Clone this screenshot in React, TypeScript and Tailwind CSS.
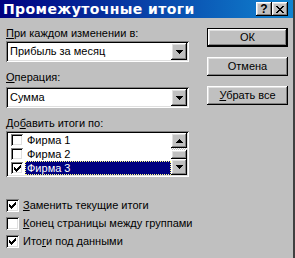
import React from "react";

const raised =
  "shadow-[inset_-1px_-1px_0_#000,inset_1px_1px_0_#fff,inset_-2px_-2px_0_#808080,inset_2px_2px_0_#dfdfdf]";
const sunken =
  "shadow-[inset_1px_1px_0_#808080,inset_-1px_-1px_0_#fff,inset_2px_2px_0_#000,inset_-2px_-2px_0_#dfdfdf]";

function Check() {
  const starts = [2, 3, 4, 3, 2, 1, 0];
  const d = starts.map((s, i) => `M${i} ${s}h1v3h-1z`).join("");
  return (
    <svg width="7" height="7" viewBox="0 0 7 7" shapeRendering="crispEdges">
      <path d={d} fill="#000" />
    </svg>
  );
}

function DownArrow() {
  return (
    <svg width="7" height="4" viewBox="0 0 7 4" shapeRendering="crispEdges">
      <path d="M0 0h7v1h-1v1h-1v1h-1v1h-1v-1h-1v-1h-1v-1h-1z" fill="#000" />
    </svg>
  );
}

function UpArrow() {
  return (
    <svg width="7" height="4" viewBox="0 0 7 4" shapeRendering="crispEdges">
      <path d="M3 0h1v1h1v1h1v1h1v1h-7v-1h1v-1h1v-1h1z" fill="#000" />
    </svg>
  );
}

function CheckBox({ checked, size = 13 }: { checked: boolean; size?: number }) {
  return (
    <div
      className={`flex items-center justify-center bg-white shrink-0 ${sunken}`}
      style={{ width: size, height: size }}
    >
      {checked && <Check />}
    </div>
  );
}

function Combo({ value }: { value: string }) {
  return (
    <div className={`h-[21px] w-[183px] bg-white flex items-stretch p-[2px] ${sunken}`}>
      <div className="flex-1 flex items-center pl-[2px] text-black">{value}</div>
      <div className={`w-[16px] bg-[#c0c0c0] flex items-center justify-center ${raised}`}>
        <DownArrow />
      </div>
    </div>
  );
}

function Button({ children, def }: { children: React.ReactNode; def?: boolean }) {
  return (
    <div className={`h-[19px] w-[81px] ${def ? "border border-black" : ""}`}>
      <div className={`h-full w-full bg-[#c0c0c0] flex items-center justify-center ${raised}`}>
        {children}
      </div>
    </div>
  );
}

export default function App() {
  return (
    <div
      className="w-[295px] h-[258px] bg-[#c0c0c0] flex flex-col text-[11px] leading-[13px] text-black border-r-2 border-[#404040] overflow-hidden"
      style={{ fontFamily: '"Liberation Sans", Arial, sans-serif' }}
    >
      {/* Title bar */}
      <div className="h-[18px] shrink-0 bg-[linear-gradient(to_right,#000080,#1084d0)] flex items-center pl-[3px] pr-[5px]">
        <div
          className="flex-1 text-white font-bold text-[14px] leading-[16px] tracking-[0.4px] whitespace-nowrap"
          style={{ fontFamily: '"DejaVu Sans", sans-serif' }}
        >
          Промежуточные итоги
        </div>
        <div className="flex">
          <div className={`w-[16px] h-[14px] bg-[#c0c0c0] flex items-center justify-center font-bold text-[12px] leading-[12px] ${raised}`}>
            ?
          </div>
          <div className={`w-[16px] h-[14px] bg-[#c0c0c0] flex items-center justify-center ${raised}`}>
            <svg width="8" height="7" viewBox="0 0 8 7" shapeRendering="crispEdges">
              <path
                d="M0 0h2v1h1v1h2v-1h1v-1h2v1h-1v1h-1v1h-1v1h1v1h1v1h1v1h-2v-1h-1v-1h-2v1h-1v1h-2v-1h1v-1h1v-1h1v-1h-1v-1h-1v-1h-1z"
                fill="#000"
              />
            </svg>
          </div>
        </div>
      </div>

      <div className="flex pl-[6px] pt-[9px]">
        {/* Left column */}
        <div className="w-[183px] shrink-0 flex flex-col">
          <div className="whitespace-nowrap">
            <span className="underline">П</span>ри каждом изменении в:
          </div>
          <div className="mt-[1px]">
            <Combo value="Прибыль за месяц" />
          </div>
          <div className="mt-[9px] whitespace-nowrap">
            <span className="underline">О</span>перация:
          </div>
          <div className="mt-[3px]">
            <Combo value="Сумма" />
          </div>
          <div className="mt-[9px] whitespace-nowrap">
            До<span className="underline">б</span>авить итоги по:
          </div>
          {/* List */}
          <div className={`mt-[1px] h-[46px] bg-white p-[2px] flex ${sunken}`}>
            <div className="flex-1 flex flex-col">
              {[
                { t: "Фирма 1", c: false },
                { t: "Фирма 2", c: false },
                { t: "Фирма 3", c: true, sel: true },
              ].map((r) => (
                <div key={r.t} className="h-[14px] flex items-center">
                  <div className="w-[17px] flex justify-end pr-[2px]">
                    <CheckBox checked={r.c} size={12} />
                  </div>
                  <div
                    className={`flex-1 h-full flex items-center pl-[1px] ${
                      r.sel ? "bg-[#000080] text-white border border-dotted border-[#ffff80]" : "border border-transparent"
                    }`}
                  >
                    {r.t}
                  </div>
                </div>
              ))}
            </div>
            <div className="w-[16px] flex flex-col">
              <div className={`h-[15px] bg-[#c0c0c0] flex items-center justify-center ${raised}`}>
                <UpArrow />
              </div>
              <div className="h-[2px] bg-[repeating-conic-gradient(#fff_0_25%,#c0c0c0_0_50%)] bg-[length:2px_2px]" />
              <div className={`h-[9px] bg-[#c0c0c0] ${raised}`} />
              <div className={`flex-1 bg-[#c0c0c0] flex items-center justify-center ${raised}`}>
                <DownArrow />
              </div>
            </div>
          </div>

          {/* Checkboxes */}
          <div className="mt-[22px] flex flex-col gap-[5px] whitespace-nowrap">
            <div className="flex items-center gap-[4px] h-[13px]">
              <CheckBox checked />
              <span>
                <span className="underline">З</span>аменить текущие итоги
              </span>
            </div>
            <div className="flex items-center gap-[4px] h-[13px]">
              <CheckBox checked={false} />
              <span>
                <span className="underline">К</span>онец страницы между группами
              </span>
            </div>
            <div className="flex items-center gap-[4px] h-[13px]">
              <CheckBox checked />
              <span>
                Ито<span className="underline">г</span>и под данными
              </span>
            </div>
          </div>
        </div>

        {/* Right column */}
        <div className="ml-[18px] shrink-0 flex flex-col pt-[1px] gap-[10px]">
          <Button def>ОК</Button>
          <Button>Отмена</Button>
          <Button>
            <span>
              <span className="underline">У</span>брать все
            </span>
          </Button>
        </div>
      </div>
    </div>
  );
}
